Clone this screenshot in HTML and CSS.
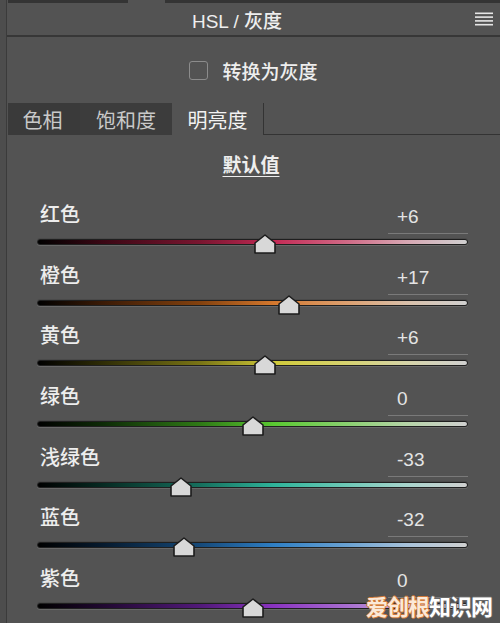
FILE: index.html
```html
<!DOCTYPE html>
<html>
<head>
<meta charset="UTF-8">
<title>HSL / 灰度</title>
<link rel="stylesheet" href="styles.css">
</head>
<body>
<div class="frame">
  <div class="edge"></div>
  <div class="panel">
    <div class="topstrip">
      <span class="tabstub first"></span>
      <span class="tabgap"></span>
      <span class="tabstub rest"></span>
    </div>

    <div class="titlebar">
      <span class="title">HSL / 灰度</span>
      <svg class="menu" width="18" height="14" viewBox="0 0 18 14">
        <rect x="0" y="0.5" width="18" height="1.6" fill="#e6e6e6"/>
        <rect x="0" y="4.3" width="18" height="1.6" fill="#e6e6e6"/>
        <rect x="0" y="8.1" width="18" height="1.6" fill="#e6e6e6"/>
        <rect x="0" y="11.9" width="18" height="1.6" fill="#e6e6e6"/>
      </svg>
    </div>

    <div class="checkrow">
      <span class="checkbox"></span>
      <span class="checklabel">转换为灰度</span>
    </div>

    <div class="tabs">
      <span class="tab t1">色相</span>
      <span class="tab t2">饱和度</span>
      <span class="tab active">明亮度</span>
      <span class="tabfill"></span>
    </div>

    <div class="defaults"><span>默认值</span></div>

    <div class="rows">
      <div class="row">
        <div class="rowhead"><span class="label">红色</span><span class="value">+6</span></div>
        <div class="trackwrap"><div class="track red"></div><svg class="thumb" style="left:53%" width="22" height="20" viewBox="0 0 22 20"><polygon points="11,1 21,9 21,19 1,19 1,9"/></svg></div>
      </div>
      <div class="row">
        <div class="rowhead"><span class="label">橙色</span><span class="value">+17</span></div>
        <div class="trackwrap"><div class="track orange"></div><svg class="thumb" style="left:58.5%" width="22" height="20" viewBox="0 0 22 20"><polygon points="11,1 21,9 21,19 1,19 1,9"/></svg></div>
      </div>
      <div class="row">
        <div class="rowhead"><span class="label">黄色</span><span class="value">+6</span></div>
        <div class="trackwrap"><div class="track yellow"></div><svg class="thumb" style="left:53%" width="22" height="20" viewBox="0 0 22 20"><polygon points="11,1 21,9 21,19 1,19 1,9"/></svg></div>
      </div>
      <div class="row">
        <div class="rowhead"><span class="label">绿色</span><span class="value">0</span></div>
        <div class="trackwrap"><div class="track green"></div><svg class="thumb" style="left:50%" width="22" height="20" viewBox="0 0 22 20"><polygon points="11,1 21,9 21,19 1,19 1,9"/></svg></div>
      </div>
      <div class="row">
        <div class="rowhead"><span class="label">浅绿色</span><span class="value">-33</span></div>
        <div class="trackwrap"><div class="track aqua"></div><svg class="thumb" style="left:33.5%" width="22" height="20" viewBox="0 0 22 20"><polygon points="11,1 21,9 21,19 1,19 1,9"/></svg></div>
      </div>
      <div class="row">
        <div class="rowhead"><span class="label">蓝色</span><span class="value">-32</span></div>
        <div class="trackwrap"><div class="track blue"></div><svg class="thumb" style="left:34%" width="22" height="20" viewBox="0 0 22 20"><polygon points="11,1 21,9 21,19 1,19 1,9"/></svg></div>
      </div>
      <div class="row">
        <div class="rowhead"><span class="label">紫色</span><span class="value">0</span></div>
        <div class="trackwrap"><div class="track purple"></div><svg class="thumb" style="left:50%" width="22" height="20" viewBox="0 0 22 20"><polygon points="11,1 21,9 21,19 1,19 1,9"/></svg></div>
      </div>
    </div>
  </div>
</div>
<div class="watermark"><span class="wm1">爱创根</span><span class="wm2">知识网</span></div>
</body>
</html>
```

FILE: styles.css
```css
body {
    margin: 0;
    padding: 0;
    width: 500px;
    height: 623px;
    overflow: hidden;
    background-color: #535353;
    color: #ececec;
    font-family: "Liberation Sans", "Noto Sans CJK SC", sans-serif;
    position: relative;
}

.frame {
    display: flex;
    height: 623px;
}

.edge {
    width: 6px;
    background-color: #4d4d4d;
    border-right: 1px solid #3b3b3b;
}

.panel {
    flex: 1;
    display: flex;
    flex-direction: column;
}

/* bits of the panel above */
.topstrip {
    display: flex;
    height: 3px;
}
.tabstub {
    background-color: #343434;
}
.tabstub.first {
    margin-left: 1px;
    width: 120px;
}
.tabgap {
    width: 37px;
}
.tabstub.rest {
    flex: 1;
}

.titlebar {
    display: flex;
    align-items: center;
    height: 32px;
    border-bottom: 2px solid #373737;
}
.title {
    flex: 1;
    text-align: center;
    padding-right: 8px;
    font-size: 19px;
    font-weight: 500;
    color: #eeeeee;
}
.menu {
    margin-right: 7px;
}

.checkrow {
    display: flex;
    justify-content: center;
    align-items: center;
    gap: 14px;
    height: 66px;
}
.checkbox {
    width: 17px;
    height: 17px;
    border: 1.5px solid #8c8c8c;
    border-radius: 3px;
}
.checklabel {
    font-size: 19px;
    font-weight: 500;
    color: #eeeeee;
}

.tabs {
    display: flex;
    height: 32px;
}
.tab {
    display: flex;
    align-items: center;
    justify-content: center;
    font-size: 20px;
    color: #c9c9c9;
    background-color: #3c3c3c;
}
.tab.t1 {
    width: 72px;
    margin-left: 1px;
    padding-right: 3px;
    box-sizing: border-box;
    background-color: #3a3a3a;
}
.tab.t2 {
    width: 92px;
}
.tab.active {
    width: 91px;
    color: #f2f2f2;
    background-color: transparent;
}
.tabfill {
    flex: 1;
    border-left: 1.5px solid #333333;
    border-bottom: 1.5px solid #333333;
}

.defaults {
    display: flex;
    justify-content: center;
    padding-top: 19px;
    padding-right: 5px;
    height: 43px;
}
.defaults span {
    font-size: 19px;
    font-weight: bold;
    color: #eeeeee;
    text-decoration: underline;
    text-underline-offset: 4px;
    line-height: 24px;
}

.rows {
    display: flex;
    flex-direction: column;
    padding-left: 30px;
    padding-right: 32px;
}
.row {
    height: 60.67px;
}
.rowhead {
    display: flex;
    justify-content: space-between;
    height: 37px;
}
.label {
    margin-left: 3px;
    font-size: 20px;
    font-weight: 500;
    line-height: 36px;
    color: #ededed;
}
.value {
    width: 71px;
    padding-left: 9px;
    padding-top: 9px;
    height: 27px;
    line-height: 22px;
    font-size: 19px;
    color: #e4e4e4;
    border-bottom: 1.5px solid #7a7a7a;
}

.trackwrap {
    position: relative;
    height: 16px;
    display: flex;
    align-items: center;
}
.track {
    flex: 1;
    height: 4px;
    border: 1px solid #1f1f1f;
    border-radius: 3px;
    box-shadow: 0 1px 0 #686868, 0 -1px 0 #4a4a4a;
}
.track.red {
    background: linear-gradient(to right, #000000 0%, #3a0714 15%, #7a1630 38%, #c42a55 55%, #d06a86 72%, #d7a7b3 86%, #d0d0d0 100%);
}
.track.orange {
    background: linear-gradient(to right, #000000 0%, #3a1a06 15%, #84420f 38%, #d4782e 55%, #dca070 72%, #d9c0aa 86%, #d0d0d0 100%);
}
.track.yellow {
    background: linear-gradient(to right, #000000 0%, #2e2c06 15%, #7a7516 38%, #d0ca3a 55%, #d6d270 72%, #d6d4a8 86%, #d0d0d0 100%);
}
.track.green {
    background: linear-gradient(to right, #000000 0%, #0d2a06 15%, #2f7a16 38%, #5ac832 55%, #8ad070 72%, #b6d4a8 86%, #d0d0d0 100%);
}
.track.aqua {
    background: linear-gradient(to right, #000000 0%, #062a22 15%, #16705e 38%, #2fb49a 55%, #6ec8b6 72%, #a8d4cc 86%, #d0d0d0 100%);
}
.track.blue {
    background: linear-gradient(to right, #000000 0%, #061a2e 15%, #164a7a 38%, #2f7fc4 55%, #6aa2d2 72%, #a8c2da 86%, #d0d0d0 100%);
}
.track.purple {
    background: linear-gradient(to right, #000000 0%, #200830 15%, #521a7a 38%, #8a34c0 55%, #a86ed0 72%, #c2a8d6 86%, #d0d0d0 100%);
}

/* slider handle sits over the track */
.thumb {
    position: absolute;
    top: 0;
    transform: translateX(-50%);
}
.thumb polygon {
    fill: #d8d8d8;
    stroke: #1c1c1c;
    stroke-width: 1.6;
    stroke-linejoin: round;
}

.watermark {
    position: absolute;
    left: 366px;
    top: 594px;
    line-height: 22px;
    font-family: "Noto Sans CJK SC", sans-serif;
    font-size: 22px;
    font-weight: bold;
    letter-spacing: -1px;
}
.wm1 {
    color: #fbe9d8;
    text-shadow: -1px 0 #d27a3a, 1px 0 #d27a3a, 0 -1px #d27a3a, 0 1px #d27a3a;
}
.wm2 {
    color: #ffffff;
    text-shadow: -1px 0 #6a6a6a, 1px 0 #6a6a6a, 0 -1px #6a6a6a, 0 1px #6a6a6a;
}
```
